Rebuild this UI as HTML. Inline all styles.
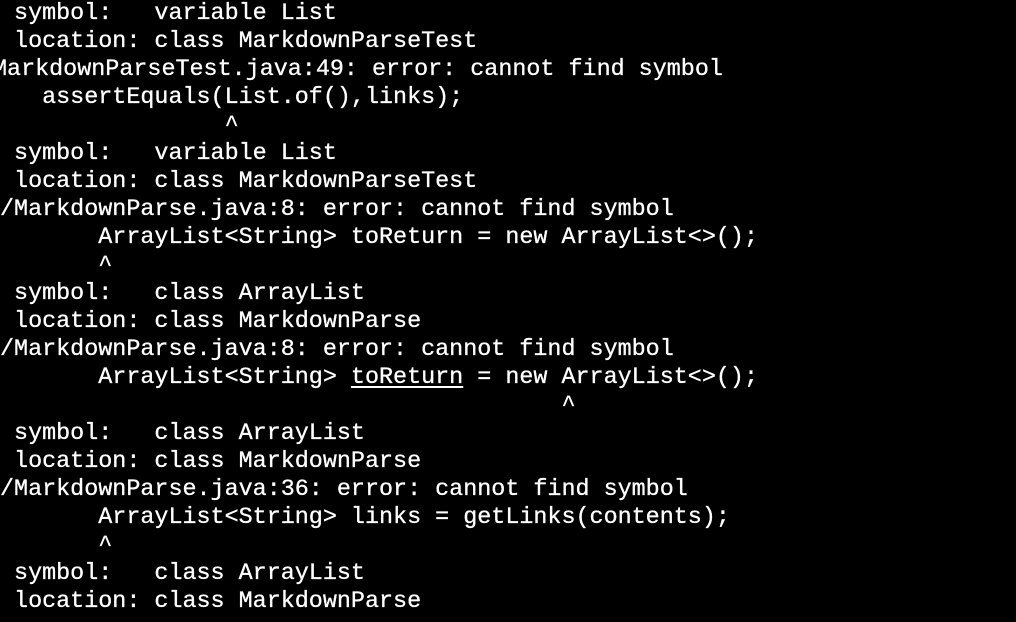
<!DOCTYPE html>
<html><head><meta charset="utf-8"><style>
html,body{margin:0;padding:0;background:#000;width:1016px;height:622px;overflow:hidden}
pre{margin:0;position:absolute;left:0px;top:0px;font-family:"Liberation Mono",monospace;font-size:23.4px;line-height:28px;color:#fff;white-space:pre;-webkit-text-stroke:0.3px #fff}
.s{position:relative;left:-7px}
u{text-decoration:underline;text-underline-offset:3px}
</style></head><body>
<pre> symbol:   variable List
 location: class MarkdownParseTest
<span class="s">MarkdownParseTest.java:49: error: cannot find symbol</span>
   assertEquals(List.of(),links);
                ^
 symbol:   variable List
 location: class MarkdownParseTest
/MarkdownParse.java:8: error: cannot find symbol
       ArrayList&lt;String&gt; toReturn = new ArrayList&lt;&gt;();
       ^
 symbol:   class ArrayList
 location: class MarkdownParse
/MarkdownParse.java:8: error: cannot find symbol
       ArrayList&lt;String&gt; <u>toReturn</u> = new ArrayList&lt;&gt;();
                                        ^
 symbol:   class ArrayList
 location: class MarkdownParse
/MarkdownParse.java:36: error: cannot find symbol
       ArrayList&lt;String&gt; links = getLinks(contents);
       ^
 symbol:   class ArrayList
 location: class MarkdownParse</pre>
</body></html>
